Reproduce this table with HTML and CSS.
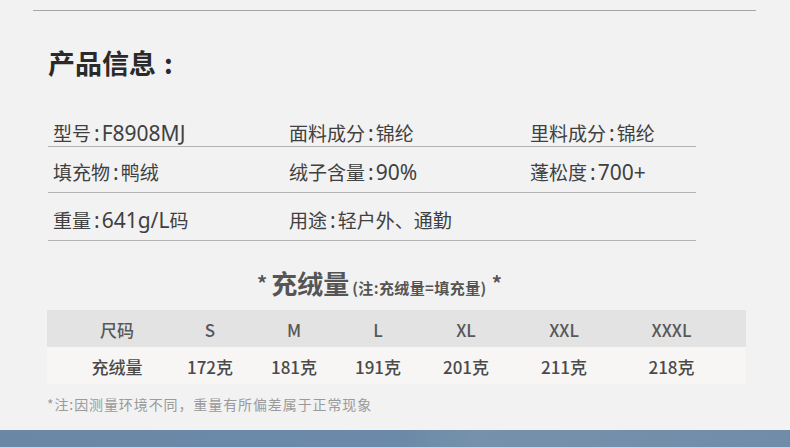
FILE: index.html
```html
<!DOCTYPE html>
<html lang="zh-CN">
<head>
<meta charset="utf-8">
<link rel="stylesheet" href="styles.css">
</head>
<body>
<div class="page">
  <hr class="top-rule">
  <h1 class="title">产品信息<span class="title-colon">:</span></h1>
  <div class="info">
    <div class="info-row row-first">
      <span class="cell">型号<span class="sep">:</span><span class="lat">F8908MJ</span></span>
      <span class="cell">面料成分<span class="sep">:</span>锦纶</span>
      <span class="cell">里料成分<span class="sep">:</span>锦纶</span>
    </div>
    <div class="info-row row-2">
      <span class="cell">填充物<span class="sep">:</span>鸭绒</span>
      <span class="cell">绒子含量<span class="sep">:</span><span class="lat">90%</span></span>
      <span class="cell">蓬松度<span class="sep">:</span><span class="lat">700+</span></span>
    </div>
    <div class="info-row row-3">
      <span class="cell">重量<span class="sep">:</span><span class="lat">641g/L</span>码</span>
      <span class="cell">用途<span class="sep">:</span>轻户外、通勤</span>
      <span class="cell"></span>
    </div>
  </div>
  <div class="fill-heading">
    <span class="star">*</span><span class="fill-main">充绒量</span><span class="fill-note">(注:充绒量=填充量)</span><span class="star star-end">*</span>
  </div>
  <div class="size-table">
    <div class="tr thead">
      <span>尺码</span><span>S</span><span>M</span><span>L</span><span>XL</span><span>XXL</span><span>XXXL</span>
    </div>
    <div class="tr tbody">
      <span>充绒量</span><span>172克</span><span>181克</span><span>191克</span><span>201克</span><span>211克</span><span>218克</span>
    </div>
  </div>
  <p class="footnote">*注:因测量环境不同，重量有所偏差属于正常现象</p>
  <div class="band"></div>
</div>
</body>
</html>
```

FILE: styles.css
```css
html, body {
  margin: 0;
  padding: 0;
  background: #f2f2f2;
}
.page {
  width: 790px;
  height: 447px;
  overflow: hidden;
  background: #f2f2f2;
  font-family: "Noto Sans CJK SC", "Noto Sans", sans-serif;
  display: flex;
  flex-direction: column;
}
.top-rule {
  margin: 10px 34px 0 33px;
  border: 0;
  border-top: 1px solid #a6a6a6;
  height: 0;
}
.title {
  margin: 38px 0 0 48px;
  font-size: 27px;
  line-height: 28px;
  font-weight: 700;
  color: #2a2a2a;
}
.title-colon { margin-left: 8px; }
.info {
  margin: 0 94px 0 48px;
}
.info-row {
  display: grid;
  grid-template-columns: 236px 241px 1fr;
  padding-left: 5px;
  font-size: 19px;
  line-height: 26px;
  color: #404040;
  border-bottom: 1px solid #b3b3b3;
  white-space: nowrap;
}
.lat, .sep {
  font-family: "Noto Sans", sans-serif;
  font-size: 21px;
}
.sep { margin: 0 2px 0 3px; }
.row-first { padding-top: 43px; }
.row-2 { padding-top: 12px; padding-bottom: 7px; }
.row-3 { padding-top: 14px; padding-bottom: 7px; }
.fill-heading {
  margin-top: 27px;
  padding-left: 257px;
  display: flex;
  align-items: baseline;
  height: 30px;
  line-height: 30px;
  color: #555;
}
.star {
  font-size: 20px;
  font-weight: 700;
  align-self: flex-start;
  line-height: 20px;
  margin-top: 5px;
}
.star-end { margin-left: 5px; }
.fill-main {
  font-size: 26px;
  font-weight: 700;
  margin-left: 4px;
}
.fill-note {
  font-size: 15px;
  font-weight: 700;
  letter-spacing: 0.4px;
  margin-left: 3px;
  color: #555;
}
.size-table {
  margin: 12px 44px 0 47px;
}
.tr {
  display: grid;
  grid-template-columns: 140px 46px 122px 46px 130px 66px 1fr;
  height: 37px;
  font-size: 17px;
  font-weight: 500;
}
.tr span {
  justify-self: center;
  white-space: nowrap;
  padding-top: 3px;
  line-height: 34px;
}
.thead { background: #e3e3e3; color: #585858; }
.tbody { background: #f8f6f5; color: #4a4a4a; }
.footnote {
  margin: 10px 0 0 47px;
  font-size: 14px;
  letter-spacing: 0.9px;
  line-height: 20px;
  color: #9a9a9a;
}
.band {
  margin-top: 16px;
  flex: 1;
  background: linear-gradient(90deg, #6a87a6 0%, #6b89a8 50%, #7591ab 60%, #708ca9 100%);
}
```
